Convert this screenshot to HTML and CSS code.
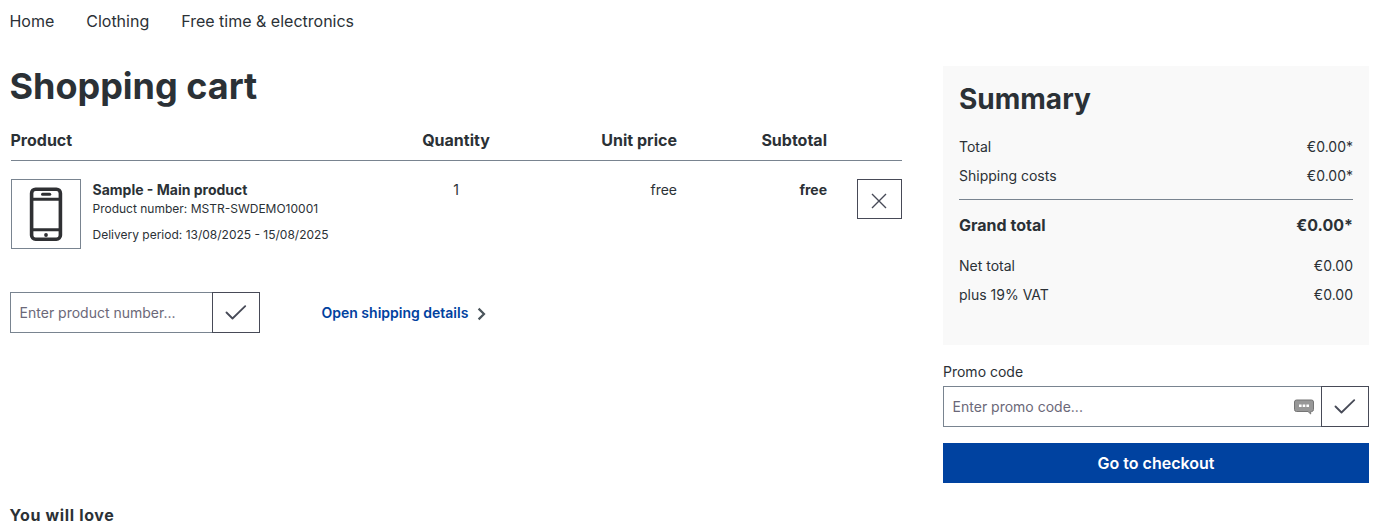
FILE: index.html
```html
<!DOCTYPE html>
<html lang="en">
<head>
<meta charset="utf-8">
<title>Shopping cart</title>
<link rel="stylesheet" href="styles.css">
</head>
<body>
<nav class="nav"><a>Home</a><a>Clothing</a><a>Free time &amp; electronics</a></nav>
<div class="layout">
  <main class="cart">
    <h1 class="title">Shopping cart</h1>
    <div class="row head">
      <span>Product</span><span class="center">Quantity</span><span class="right">Unit price</span><span class="right">Subtotal</span>
    </div>
    <div class="row item">
      <div class="product">
        <div class="thumb">
          <svg width="34" height="56" viewBox="0 0 34 56"><rect x="2.6" y="3.2" width="28.8" height="50" rx="4" fill="none" stroke="#2f3033" stroke-width="3.6"/><path d="M3 13.200h28M3 43.800h28" stroke="#2f3033" stroke-width="3"/><path d="M13.500 8.200h7.200" stroke="#2f3033" stroke-width="3" stroke-linecap="round"/><circle cx="17" cy="49" r="1.900" fill="#2f3033"/></svg>
        </div>
        <div class="info">
          <div class="name">Sample - Main product</div>
          <div class="meta">Product number: MSTR-SWDEMO10001</div>
          <div class="meta delivery">Delivery period: 13/08/2025 - 15/08/2025</div>
        </div>
      </div>
      <span class="center">1</span><span class="right">free</span><span class="right bold">free</span>
      <button class="remove" aria-label="Remove"><svg width="16" height="16" viewBox="0 0 16 16"><path d="M1 1l14 14M15 1L1 15" fill="none" stroke="#474a57" stroke-width="1.4"/></svg></button>
    </div>
    <div class="actions">
      <div class="group add">
        <div class="field">Enter product number...</div>
        <button class="confirm" aria-label="Add"><svg width="22" height="16" viewBox="0 0 22 16"><path d="M1.500 7.500l6 6L20.200 1.200" fill="none" stroke="#474a57" stroke-width="1.8" stroke-linecap="round" stroke-linejoin="round"/></svg></button>
      </div>
      <a class="shipping">Open shipping details<svg width="9" height="14" viewBox="0 0 9 14"><path d="M1.600 1.600L7 7l-5.400 5.400" fill="none" stroke="#4a545b" stroke-width="2.2"/></svg></a>
    </div>
  </main>
  <aside class="sidebar">
    <section class="summary">
      <h2 class="subtitle">Summary</h2>
      <div class="line"><span>Total</span><span>€0.00*</span></div>
      <div class="line"><span>Shipping costs</span><span>€0.00*</span></div>
      <div class="line grand"><span>Grand total</span><span>€0.00*</span></div>
      <div class="line"><span>Net total</span><span>€0.00</span></div>
      <div class="line"><span>plus 19% VAT</span><span>€0.00</span></div>
    </section>
    <div class="label">Promo code</div>
    <div class="group promo">
      <div class="field">Enter promo code...<svg class="bubble" width="20" height="16" viewBox="0 0 20 16"><path d="M2.500 1h15q2 0 2 2v7.500q0 2-2 2h-.8v2.500l-2.700-2.500H2.500q-2 0-2-2V3q0-2 2-2z" fill="#989898" stroke="#757575" stroke-width="1"/><path d="M5 5.400h2.600V8H5zM8.700 5.400h2.600V8H8.700zM12.400 5.400H15V8h-2.600z" fill="#fff"/></svg></div>
      <button class="confirm" aria-label="Apply"><svg width="22" height="16" viewBox="0 0 22 16"><path d="M1.500 7.500l6 6L20.200 1.200" fill="none" stroke="#474a57" stroke-width="1.8" stroke-linecap="round" stroke-linejoin="round"/></svg></button>
    </div>
    <button class="checkout">Go to checkout</button>
  </aside>
</div>
<div class="love">You will love</div>
</body>
</html>
```
FILE: styles.css
```css
* { box-sizing: border-box; }
html { overflow: hidden; }
body { margin: 0; height: 523px; overflow: hidden; background: #fff; color: #2b3136; font: 14px/21px Inter, "Noto Sans", sans-serif; }
button { font: inherit; background: #fff; border: 1px solid #474a57; padding: 0; display: flex; align-items: center; justify-content: center; }
.nav { display: flex; gap: 32px; padding: 9px 9.4px 0; height: 66px; font-size: 16px; line-height: 24px; }
.layout { display: flex; gap: 41px; padding-left: 10px; height: 438px; }
.cart { width: 892px; }
.title { margin: 0 0 0 -.6px; height: 62px; font-size: 36px; line-height: 40px; font-weight: 700; }
.row { display: grid; grid-template-columns: 376px 138px 152px 150px; margin-left: 1px; }
.head { height: 33px; font-size: 16px; line-height: 24px; font-weight: 700; border-bottom: 1px solid #798490; }
.head span:first-child { margin-left: -.5px; }
.center { text-align: center; }
.right { text-align: right; }
.bold { font-weight: 700; }
.item { grid-template-columns: 376px 138px 152px 150px 75px; padding-top: 18px; height: 131px; }
.product { display: flex; gap: 11.5px; }
.thumb { width: 70px; height: 70px; border: 1px solid #798490; display: flex; align-items: center; justify-content: center; }
.name { font-weight: 700; line-height: 21px; }
.meta { font-size: 12px; line-height: 18px; }
.delivery { margin-top: 8px; }
.remove { width: 45px; height: 40px; justify-self: end; padding: 3px 1px 0 0; }
.actions { display: flex; gap: 61.5px; align-items: center; }
.group { display: flex; height: 41px; }
.add { width: 250px; }
.field { flex: 1; display: flex; align-items: center; justify-content: space-between; border: 1px solid #798490; border-right: 0; padding: 0 7px 0 8.6px; color: #6b6878; }
.confirm { width: 48px; }
.shipping { display: flex; align-items: center; gap: 8.5px; color: #0042a0; font-weight: 600; }
.shipping svg { margin-top: 3px; }
.sidebar { width: 426px; }
.summary { height: 279px; background: #f9f9f9; padding: 16px; }
.subtitle { margin: 0 0 20px; font-size: 28px; line-height: 34px; font-weight: 700; }
.line { display: flex; justify-content: space-between; height: 29px; }
.grand { margin-top: 5px; padding-top: 13px; height: 56px; border-top: 1px solid #798490; font-size: 16px; line-height: 24px; font-weight: 700; }
.label { padding-top: 16px; height: 41px; }
.checkout { width: 100%; height: 40px; margin-top: 16px; border: 0; background: #0042a0; color: #fff; font-size: 16px; font-weight: 600; }
.love { margin-top: -1px; padding-left: 9.5px; font-size: 16px; line-height: 24px; font-weight: 700; letter-spacing: .64px; }
```
